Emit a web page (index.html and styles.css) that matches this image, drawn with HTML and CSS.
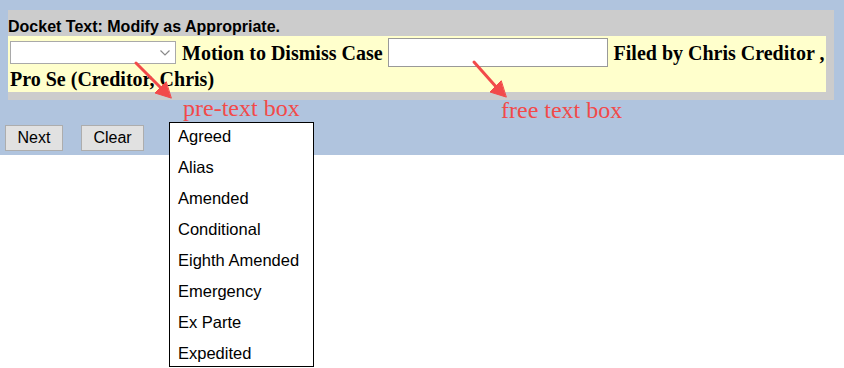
FILE: index.html
```html
<!DOCTYPE html>
<html>
<head>
<meta charset="utf-8">
<link rel="stylesheet" href="styles.css">
</head>
<body>
<div class="page">
  <div class="panel">
    <div class="panel-title">Docket Text: Modify as Appropriate.</div>
    <div class="docket">
      <span class="select"><svg class="chev" width="10" height="6" viewBox="0 0 10 6"><path d="M0.5 0.5 L5 5 L9.5 0.5" fill="none" stroke="#8a8a8a" stroke-width="1.2"/></svg></span>
      Motion to Dismiss Case
      <span class="textbox"></span>
      Filed by Chris Creditor ,
      Pro Se (Creditor, Chris)
    </div>
  </div>
  <div class="actions">
    <button class="btn">Next</button>
    <button class="btn">Clear</button>
  </div>
</div>

<ul class="dropdown">
  <li>Agreed</li>
  <li>Alias</li>
  <li>Amended</li>
  <li>Conditional</li>
  <li>Eighth Amended</li>
  <li>Emergency</li>
  <li>Ex Parte</li>
  <li>Expedited</li>
</ul>

<div class="note note-pre">pre-text box</div>
<div class="note note-free">free text box</div>

<svg class="arrows" width="844" height="368" viewBox="0 0 844 368">
  <g stroke="#f24a4a" stroke-width="3" stroke-linecap="round" fill="#f24a4a">
    <line x1="136" y1="63" x2="163" y2="90"/>
    <polygon points="171,98 155,93 166,82" stroke-width="1"/>
    <line x1="474" y1="62" x2="498" y2="89"/>
    <polygon points="506,97 490,92 501,81" stroke-width="1"/>
  </g>
</svg>
</body>
</html>
```

FILE: styles.css
```css
html, body {
  margin: 0;
  padding: 0;
  background: #ffffff;
}

body {
  position: relative;
  width: 844px;
  height: 368px;
  overflow: hidden;
  font-family: "Liberation Sans", Arial, sans-serif;
}

.page {
  background: #b0c4de;
  height: 155px;
  padding-top: 10px;
  box-sizing: border-box;
}

.panel {
  background: #cccccc;
  margin-left: 8px;
  width: 826px;
  box-sizing: border-box;
  padding: 0 8px 8px 0;
}

.panel-title {
  font-family: "Liberation Sans", Arial, sans-serif;
  font-weight: bold;
  font-size: 16px;
  line-height: 19px;
  height: 26px;
  padding-top: 7px;
  color: #000;
  box-sizing: border-box;
  white-space: nowrap;
}

.docket {
  background: #ffffcc;
  padding: 2px 0 0 2px;
  height: 56px;
  box-sizing: border-box;
  font-family: "Liberation Serif", "Times New Roman", serif;
  font-weight: bold;
  font-size: 20px;
  line-height: 25px;
  color: #000;
}

.select {
  display: inline-block;
  vertical-align: -4px;
  width: 166px;
  height: 23px;
  box-sizing: border-box;
  border: 1px solid #a9a9a9;
  background: #fff;
  position: relative;
  margin-right: 1px;
}

.chev {
  position: absolute;
  right: 5px;
  top: 8px;
}

.textbox {
  display: inline-block;
  vertical-align: -7px;
  width: 220px;
  height: 29px;
  box-sizing: border-box;
  border: 1px solid #999;
  background: #fff;
  margin: 0 1px 0 0;
}

.actions {
  display: flex;
  gap: 18px;
  padding: 25px 0 0 5px;
}

.btn {
  font-family: "Liberation Sans", Arial, sans-serif;
  font-size: 16px;
  height: 26px;
  padding: 0 10px;
  background: #e1e1e1;
  border: 1px solid #adadad;
  color: #000;
  border-radius: 0;
  margin: 0;
}

.btn:first-child {
  width: 58px;
}

.btn:last-child {
  width: 63px;
}

.dropdown {
  position: absolute;
  left: 169px;
  top: 122px;
  width: 145px;
  height: 245px;
  box-sizing: border-box;
  margin: 0;
  padding: 0;
  list-style: none;
  background: #fff;
  border: 1px solid #000;
  font-family: "Liberation Sans", Arial, sans-serif;
  font-size: 16.5px;
}

.dropdown li {
  height: 31px;
  line-height: 26px;
  padding-left: 8px;
  color: #000;
  white-space: nowrap;
}

.note {
  position: absolute;
  font-family: "Liberation Serif", "Times New Roman", serif;
  font-size: 24px;
  color: #f24a4a;
  line-height: 24px;
  white-space: nowrap;
}

.note-pre {
  left: 183px;
  top: 96px;
}

.note-free {
  left: 501px;
  top: 98px;
}

.arrows {
  position: absolute;
  left: 0;
  top: 0;
  pointer-events: none;
}
```
